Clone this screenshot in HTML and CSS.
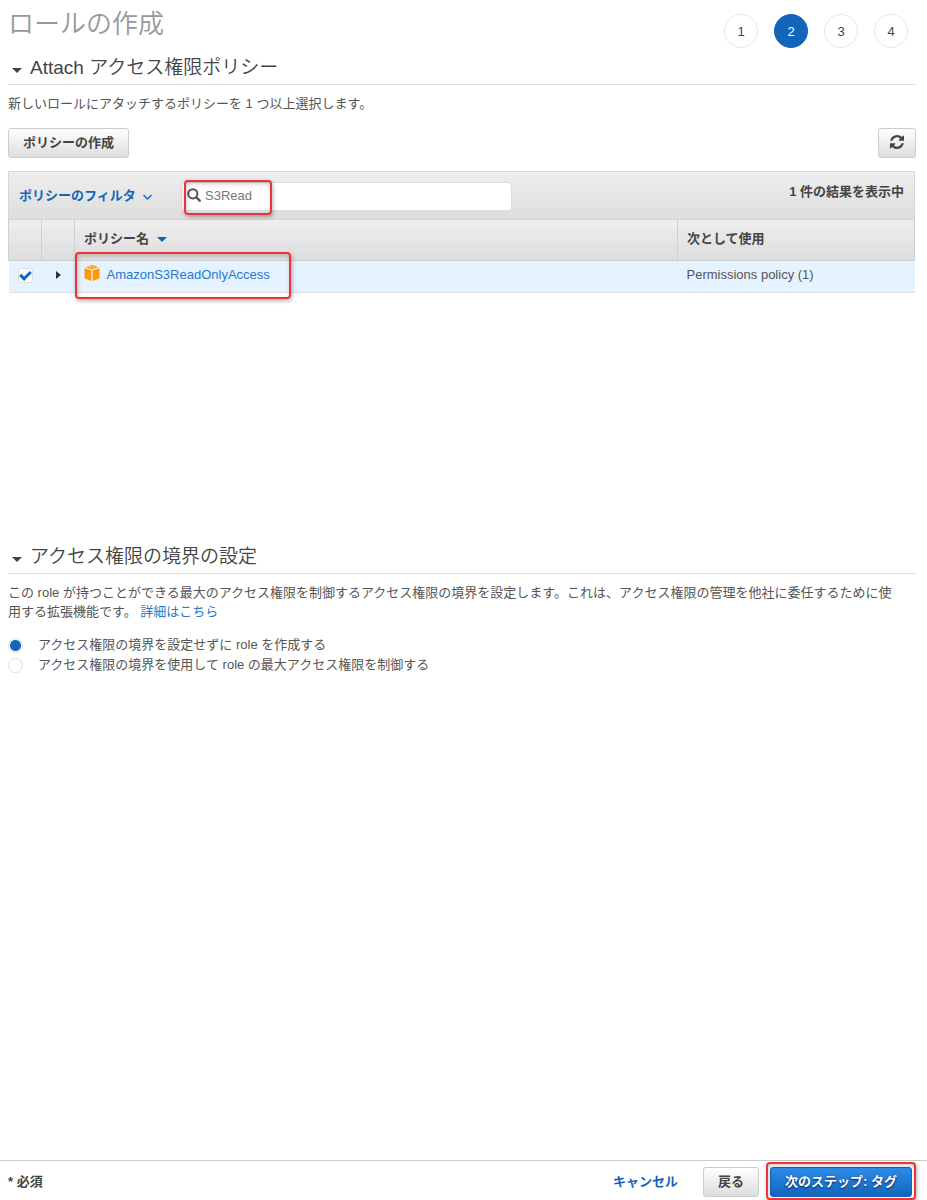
FILE: index.html
```html
<!DOCTYPE html>
<html lang="ja">
	<head>
		<meta charset="UTF-8" />
		<meta name="viewport" content="width=device-width, initial-scale=1.0" />
		<title>ロールの作成</title>
		<link rel="stylesheet" href="styles.css">
	</head>
	<body>
		<main>
			<header class="page-header">
				<h1>ロールの作成</h1>
				<ol class="steps">
					<li>1</li>
					<li class="current" aria-current="step">2</li>
					<li>3</li>
					<li>4</li>
				</ol>
			</header>

			<section class="attach">
				<h2>
					<button type="button" class="toggle" aria-expanded="true">
						<span class="caret"></span>Attach アクセス権限ポリシー
					</button>
				</h2>
				<p>新しいロールにアタッチするポリシーを 1 つ以上選択します。</p>
				<div class="toolbar">
					<button type="button" class="btn">ポリシーの作成</button>
					<button type="button" class="btn btn-icon" aria-label="更新">
						<svg width="14" height="14" viewBox="0 0 1536 1536">
							<path fill="#444" d="M1511 928q0 5-1 7-64 268-268 434.500T764 1536q-146 0-282.500-55T238 1324l-129 129q-19 19-45 19t-45-19-19-45V960q0-26 19-45t45-19h448q26 0 45 19t19 45-19 45l-137 137q71 66 161 102t187 36q134 0 250-65t186-179q11-17 53-117 8-23 30-23h192q13 0 22.500 9.500t9.500 22.500zm25-800v448q0 26-19 45t-45 19h-448q-26 0-45-19t-19-45 19-45l138-138Q969 256 768 256q-134 0-250 65T332 500q-11 17-53 117-8 23-30 23H50q-13 0-22.500-9.500T18 608v-7q65-268 270-434.500T768 0q146 0 284 55.500T1297 212l130-129q19-19 45-19t45 19 19 45z" />
						</svg>
					</button>
				</div>

				<div class="policies">
					<div class="filter-bar">
						<button type="button" class="filter">
							ポリシーのフィルタ
							<svg width="9" height="6" viewBox="0 0 9 6">
								<path fill="none" stroke="#1166bb" stroke-width="1.300" d="M.5 1l4 4 4-4" />
							</svg>
						</button>
						<div class="search">
							<svg width="14" height="14" viewBox="0 0 14 14">
								<circle cx="5.800" cy="5.800" r="4.600" fill="none" stroke="#555" stroke-width="2" />
								<path stroke="#555" stroke-width="2.400" stroke-linecap="round" d="M9.500 9.500l3.200 3.200" />
							</svg>
							<input type="text" value="S3Read" aria-label="検索" />
							<span class="mark mark-search"></span>
						</div>
						<span class="count">1 件の結果を表示中</span>
					</div>
					<table>
						<thead>
							<tr>
								<th class="narrow"></th>
								<th class="narrow"></th>
								<th>ポリシー名 <span class="caret caret-sort"></span></th>
								<th class="used">次として使用</th>
							</tr>
						</thead>
						<tbody>
							<tr>
								<td class="narrow"><input type="checkbox" checked aria-label="AmazonS3ReadOnlyAccess" /></td>
								<td class="narrow"><button type="button" class="expand" aria-label="展開"></button></td>
								<td class="name">
									<div class="policy">
										<svg width="16" height="16" viewBox="0 0 16 16" fill="#f90">
											<path d="M8 0l6.500 2.200L8 4.600 1.500 2.200z" />
											<path d="M.5 3.200l6.800 2.400V16L.5 13.200z" />
											<path d="M15.500 3.200L8.700 5.600V16l6.800-2.800z" />
											<path stroke="#e5f2ff" stroke-width=".7" d="M4.500 1L11 3.400" />
										</svg>
										<a href="#">AmazonS3ReadOnlyAccess</a>
									</div>
									<span class="mark mark-policy"></span>
								</td>
								<td>Permissions policy (1)</td>
							</tr>
						</tbody>
					</table>
				</div>
			</section>

			<section class="boundary">
				<h2>
					<button type="button" class="toggle" aria-expanded="true">
						<span class="caret"></span>アクセス権限の境界の設定
					</button>
				</h2>
				<p>この role が持つことができる最大のアクセス権限を制御するアクセス権限の境界を設定します。これは、アクセス権限の管理を他社に委任するために使用する拡張機能です。 <a href="#">詳細はこちら</a></p>
				<div class="choice">
					<input type="radio" name="boundary" id="without" checked />
					<label for="without">アクセス権限の境界を設定せずに role を作成する</label>
				</div>
				<div class="choice">
					<input type="radio" name="boundary" id="with" />
					<label for="with">アクセス権限の境界を使用して role の最大アクセス権限を制御する</label>
				</div>
			</section>
		</main>

		<footer>
			<span class="required">* 必須</span>
			<a class="cancel" href="#">キャンセル</a>
			<button type="button" class="btn">戻る</button>
			<div class="next">
				<button type="button" class="btn btn-primary">次のステップ: タグ</button>
				<span class="mark mark-next"></span>
			</div>
		</footer>
	</body>
</html>
```
FILE: styles.css
```css
* {
	box-sizing: border-box;
}

body {
	display: flex;
	flex-direction: column;
	min-height: 100vh;
	margin: 0;
	background: #fff;
	color: #555;
	font: 13px/20px "Liberation Sans", "Noto Sans CJK JP", sans-serif;
}

h1,
h2,
p,
ol {
	margin: 0;
	padding: 0;
}

button,
input {
	margin: 0;
	color: inherit;
	font: inherit;
}

a {
	color: #2878cc;
	text-decoration: none;
}

main {
	flex: 1;
	padding: 0 11px 0 8px;
}

.page-header {
	display: flex;
	justify-content: space-between;
	height: 52px;
}

h1 {
	color: #999;
	font-size: 26px;
	font-weight: 350;
	line-height: 48px;
}

.steps {
	display: flex;
	gap: 16px;
	padding: 14px 8px 0 0;
	list-style: none;
}

.steps li {
	width: 34px;
	height: 34px;
	border: 1px solid #e8e8e8;
	border-radius: 50%;
	color: #444;
	line-height: 34px;
	text-align: center;
}

.steps .current {
	border-color: #1166bb;
	background: #1166bb;
	color: #fff;
}

h2 {
	height: 33px;
	border-bottom: 1px solid #ddd;
}

.toggle {
	display: flex;
	align-items: center;
	gap: 8px;
	padding: 0 4px;
	border: 0;
	background: none;
	color: #444;
	font-size: 19px;
	font-weight: 350;
	line-height: 32px;
}

.caret {
	margin-top: 4px;
	border: 5px solid transparent;
	border-top-color: #444;
	border-bottom: 0;
}

.caret-sort {
	display: inline-block;
	margin-left: 4px;
	border-top-color: #1166bb;
	vertical-align: 1px;
}

/* Buttons */
.btn {
	height: 30px;
	padding: 0 14px;
	border: 1px solid #ccc;
	border-radius: 3px;
	background: linear-gradient(#fff, #ddd);
	color: #444;
	font-weight: bold;
	line-height: 26px;
}

.btn-icon {
	display: flex;
	align-items: center;
	justify-content: center;
	width: 38px;
	padding: 0 0 3px;
}

.btn-primary {
	border-color: #1166bb;
	background: linear-gradient(#2e8be8, #1166bb);
	color: #fff;
	text-shadow: 0 1px 2px #024;
}

.attach p {
	padding-top: 9px;
}

.toolbar {
	display: flex;
	justify-content: space-between;
	padding: 14px 0 13px;
}

/* Policy list */
.policies {
	min-height: 370px;
	padding-right: 1px;
}

.filter-bar {
	display: flex;
	height: 49px;
	padding: 10px 10px 0;
	border: 1px solid #d5d5d5;
	background: linear-gradient(#eee, #ddd);
}

.filter {
	width: 162px;
	height: 28px;
	padding: 0;
	border: 0;
	background: none;
	color: #1166bb;
	font-weight: bold;
	text-align: left;
}

.filter svg {
	margin-left: 4px;
}

.search {
	position: relative;
	width: 331px;
	height: 29px;
}

.search svg {
	position: absolute;
	top: 6px;
	left: 6px;
}

.search input {
	width: 100%;
	height: 100%;
	padding: 0 8px 2px 23px;
	border: 1px solid #ddd;
	border-radius: 4px;
	background: #fff;
	color: #777;
}

.count {
	margin-left: auto;
	color: #444;
	font-weight: bold;
}

table {
	width: 100%;
	border-collapse: collapse;
	table-layout: fixed;
}

th,
td {
	padding: 0 9px 2px;
	text-align: left;
}

th {
	height: 40px;
	border: 1px solid #d0d0d0;
	border-top: 0;
	background: linear-gradient(#eee, #ddd);
	color: #444;
}

td {
	height: 32px;
	border-bottom: 1px solid #ddd;
	background: #e5f2ff;
}

.narrow {
	width: 33px;
}

.used {
	width: 237px;
}

input[type="checkbox"],
input[type="radio"] {
	appearance: none;
	flex: none;
	width: 15px;
	height: 15px;
	border: 1px solid #ddd;
	background: #fff;
}

input[type="checkbox"] {
	display: block;
	border-radius: 3px;
}

input[type="checkbox"]:checked::before {
	content: "";
	display: block;
	box-sizing: border-box;
	width: 11px;
	height: 7px;
	margin: 2px 1px;
	border: solid #1166bb;
	border-width: 0 0 3px 3px;
	transform: rotate(-45deg);
}

input[type="radio"] {
	border-radius: 50%;
}

input[type="radio"]:checked {
	background: radial-gradient(circle, #1166bb 5px, #fff 6px);
}

.expand {
	display: block;
	margin-left: 5px;
	padding: 0;
	border: 4px solid transparent;
	border-left: 5px solid #333;
	border-right: 0;
	background: none;
}

.name {
	position: relative;
}

.policy {
	display: flex;
	gap: 7px;
}

/* Red frames over the things to click */
.mark {
	position: absolute;
	border: 2px solid #ee3338;
	border-radius: 4px;
	box-shadow: 1px 2px 4px rgba(0, 0, 0, .3), inset 1px 2px 4px rgba(0, 0, 0, .2);
	pointer-events: none;
}

.mark-search {
	top: -2px;
	left: 3px;
	width: 88px;
	height: 35px;
}

.mark-policy {
	top: -9px;
	left: 0;
	width: 216px;
	height: 47px;
}

.mark-next {
	inset: -5px -4px -3px;
}

/* Permissions boundary */
.boundary p {
	padding: 9px 12px 14px 0;
	line-height: 19px;
}

.choice {
	display: flex;
	align-items: center;
	gap: 15px;
}

footer {
	display: flex;
	align-items: center;
	height: 40px;
	padding: 3px 15px 0 8px;
	border-top: 1px solid #ccc;
	color: #444;
	font-weight: bold;
}

.required {
	margin-right: auto;
}

.cancel {
	margin-right: 25px;
	color: #1166bb;
}

.next {
	position: relative;
	margin-left: 11px;
}
```
